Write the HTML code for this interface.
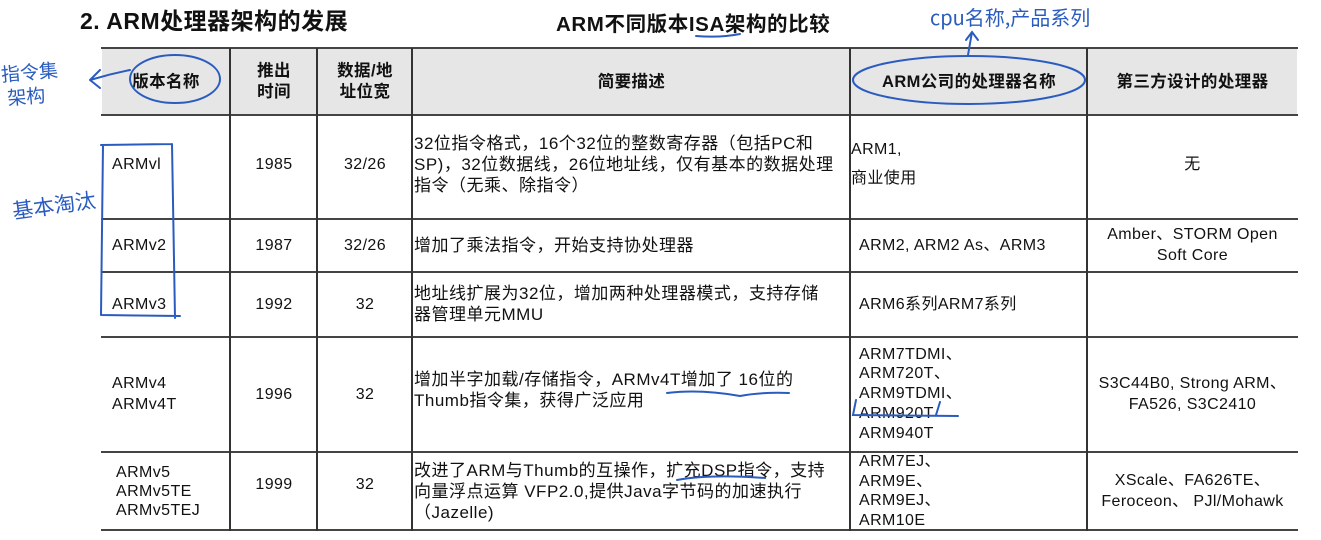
<!DOCTYPE html>
<html><head><meta charset="utf-8"><style>
body{margin:0;width:1321px;height:540px;background:#fff;overflow:hidden;position:relative;font-family:"Liberation Sans","Noto Sans CJK SC",sans-serif;color:#111}
.t{position:absolute;white-space:nowrap}
.c{position:absolute;display:flex;flex-direction:column;justify-content:center;font-size:16px;line-height:21px;letter-spacing:0.4px;white-space:nowrap}
.d{font-size:17px;letter-spacing:0.5px}
.ctr{align-items:center;text-align:center}
.hl{position:absolute;height:2px;background:#444;left:101px;width:1197px}
.vl{position:absolute;width:2px;background:#333;top:48px;height:483px}
.h{font-weight:bold;font-size:16.5px}
</style></head><body>
<div class="t" style="left:80px;top:2px;font-size:23px;font-weight:bold;letter-spacing:0.5px">2. ARM处理器架构的发展</div>
<div class="t" style="left:556px;top:7px;font-size:20.5px;font-weight:bold;letter-spacing:0.6px">ARM不同版本ISA架构的比较</div>
<div style="position:absolute;left:102px;top:49px;width:1195px;height:66px;background:#e6e6e6"></div>
<div class="hl" style="top:47px"></div>
<div class="hl" style="top:114px"></div>
<div class="hl" style="top:218px"></div>
<div class="hl" style="top:271px"></div>
<div class="hl" style="top:336px"></div>
<div class="hl" style="top:451px"></div>
<div class="hl" style="top:529px"></div>
<div class="vl" style="left:229px"></div>
<div class="vl" style="left:316px"></div>
<div class="vl" style="left:411px"></div>
<div class="vl" style="left:849px"></div>
<div class="vl" style="left:1086px"></div>

<div class="c ctr h" style="left:102px;top:49px;width:128px;height:66px">版本名称</div>
<div class="c ctr h" style="left:231px;top:49px;width:86px;height:66px">推出<br>时间</div>
<div class="c ctr h" style="left:318px;top:49px;width:94px;height:66px">数据/地<br>址位宽</div>
<div class="c ctr h" style="left:413px;top:49px;width:437px;height:66px">简要描述</div>
<div class="c ctr h" style="left:851px;top:49px;width:236px;height:66px">ARM公司的处理器名称</div>
<div class="c ctr h" style="left:1088px;top:49px;width:209px;height:66px">第三方设计的处理器</div>

<div class="c" style="left:112px;top:116px;height:96px">ARMvl</div>
<div class="c ctr" style="left:231px;top:116px;width:86px;height:96px">1985</div>
<div class="c ctr" style="left:318px;top:116px;width:94px;height:96px">32/26</div>
<div class="c d" style="left:414px;top:116px;height:96px">32位指令格式，16个32位的整数寄存器（包括PC和<br>SP)，32位数据线，26位地址线，仅有基本的数据处理<br>指令（无乘、除指令）</div>
<div class="c" style="left:851px;top:116px;height:96px;line-height:29px">ARM1,<br>商业使用</div>
<div class="c ctr" style="left:1088px;top:116px;width:209px;height:96px">无</div>

<div class="c" style="left:112px;top:220px;height:50px">ARMv2</div>
<div class="c ctr" style="left:231px;top:220px;width:86px;height:50px">1987</div>
<div class="c ctr" style="left:318px;top:220px;width:94px;height:50px">32/26</div>
<div class="c d" style="left:414px;top:220px;height:50px">增加了乘法指令，开始支持协处理器</div>
<div class="c" style="left:859px;top:220px;height:50px">ARM2, ARM2 As、ARM3</div>
<div class="c ctr" style="left:1088px;top:220px;width:209px;height:50px">Amber、STORM Open<br>Soft Core</div>

<div class="c" style="left:112px;top:273px;height:62px">ARMv3</div>
<div class="c ctr" style="left:231px;top:273px;width:86px;height:62px">1992</div>
<div class="c ctr" style="left:318px;top:273px;width:94px;height:62px">32</div>
<div class="c d" style="left:414px;top:273px;height:62px">地址线扩展为32位，增加两种处理器模式，支持存储<br>器管理单元MMU</div>
<div class="c" style="left:859px;top:273px;height:62px">ARM6系列ARM7系列</div>

<div class="c" style="left:112px;top:338px;height:112px">ARMv4<br>ARMv4T</div>
<div class="c ctr" style="left:231px;top:338px;width:86px;height:112px">1996</div>
<div class="c ctr" style="left:318px;top:338px;width:94px;height:112px">32</div>
<div class="c d" style="left:414px;top:338px;height:104px">增加半字加载/存储指令，ARMv4T增加了 16位的<br>Thumb指令集，获得广泛应用</div>
<div class="c" style="left:859px;top:338px;height:112px;line-height:19.8px">ARM7TDMI、<br>ARM720T、<br>ARM9TDMI、<br>ARM920T<br>ARM940T</div>
<div class="c ctr" style="left:1088px;top:338px;width:209px;height:112px">S3C44B0, Strong ARM、<br>FA526, S3C2410</div>

<div class="c" style="left:116px;top:453px;height:76px;line-height:19px">ARMv5<br>ARMv5TE<br>ARMv5TEJ</div>
<div class="c ctr" style="left:231px;top:453px;width:86px;height:62px">1999</div>
<div class="c ctr" style="left:318px;top:453px;width:94px;height:62px">32</div>
<div class="c d" style="left:414px;top:453px;height:76px">改进了ARM与Thumb的互操作，扩充DSP指令，支持<br>向量浮点运算 VFP2.0,提供Java字节码的加速执行<br>（Jazelle)</div>
<div class="c" style="left:859px;top:453px;height:76px;line-height:19.5px">ARM7EJ、<br>ARM9E、<br>ARM9EJ、<br>ARM10E</div>
<div class="c ctr" style="left:1088px;top:453px;width:209px;height:76px">XScale、FA626TE、<br>Feroceon、 PJl/Mohawk</div>

<svg style="position:absolute;left:0;top:0" width="1321" height="540" fill="none" stroke="#2a5cc0" stroke-width="2" stroke-linecap="round">
<ellipse cx="175" cy="79" rx="45" ry="24"/>
<path d="M130 70 Q110 74 90 80 M90 80 L100 70 M90 80 L100 88"/>
<path d="M101 145 L172 144 M103 145 L101 315 M172 144 L175 318 M101 315 L180 316"/>
<ellipse cx="969" cy="80" rx="116" ry="24"/>
<path d="M968 55 L972 32 M966 40 L972 32 L978 40"/>
<path d="M696 36 Q720 38 740 34"/>
<path d="M667 393 Q700 389 740 396 Q760 392 789 393"/>
<path d="M677 480 Q710 474 765 478"/>
<path d="M856 400 L853 415 L958 416 M940 402 L936 415"/>
</svg>
<div class="t" style="left:2px;top:60px;font-size:19px;color:#2a5cc0;font-family:'Noto Sans CJK SC',sans-serif;line-height:24px;transform:rotate(-5deg)">指令集<br>&nbsp;架构</div>
<div class="t" style="left:12px;top:190px;font-size:21px;color:#2a5cc0;font-family:'Noto Sans CJK SC',sans-serif;transform:rotate(-8deg)">基本淘汰</div>
<div class="t" style="left:930px;top:2px;font-size:20px;color:#2a5cc0;font-family:'Noto Sans CJK SC',sans-serif">cpu名称,产品系列</div>
</body></html>
